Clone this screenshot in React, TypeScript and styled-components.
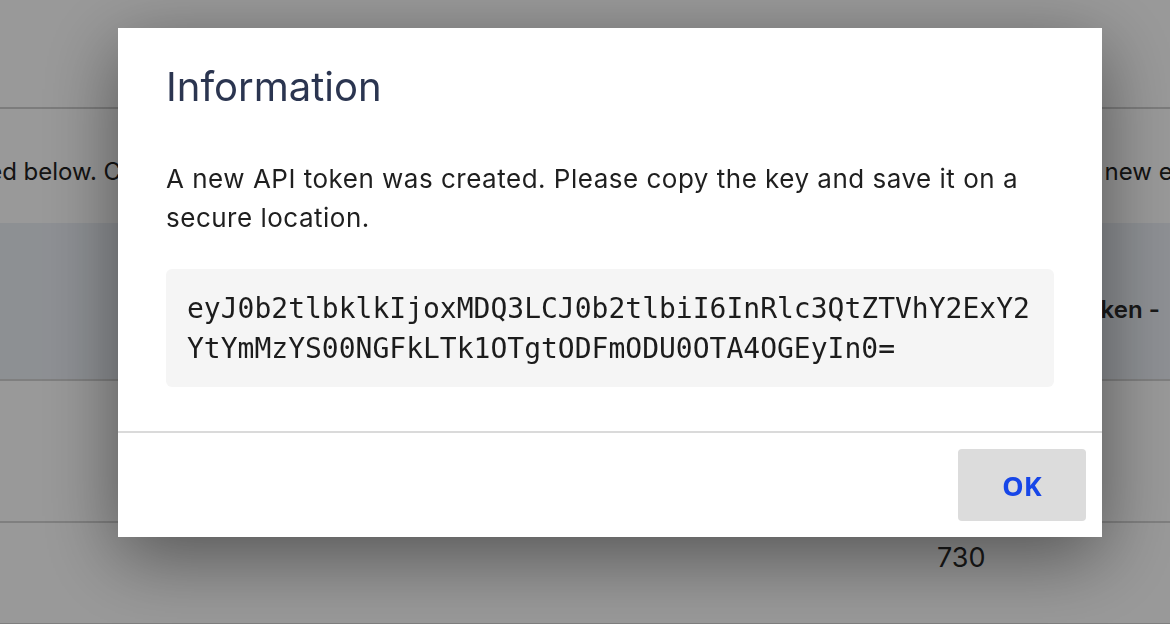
import React from "react";
import styled, { createGlobalStyle } from "styled-components";

const GlobalStyle = createGlobalStyle`
  html, body {
    margin: 0;
    padding: 0;
    background: #ffffff;
    font-family: Inter, "Noto Sans", sans-serif;
    overflow: hidden;
  }
`;

const Page = styled.div`
  width: 1170px;
  height: 624px;
  overflow: hidden;
  color: #2a2a2a;
`;

const TopBar = styled.div`
  height: 109px;
  border-bottom: 2px solid #cfcfcf;
  box-sizing: border-box;
`;

const Intro = styled.div`
  margin-top: 46px;
  display: flex;
  font-size: 24px;
  line-height: 34px;
  color: #222;
  white-space: nowrap;
`;

const Lead = styled.div`
  width: 323px;
  flex-shrink: 0;
  display: flex;
  justify-content: flex-end;
`;

const Tail = styled.span`
  margin-left: 723px;
  flex-shrink: 0;
`;

const Table = styled.div`
  margin-top: 34px;
  display: flex;
  flex-direction: column;
`;

const Row = styled.div<{ $head?: boolean; $height: number; $top: number }>`
  height: ${({ $height }) => $height}px;
  box-sizing: border-box;
  display: flex;
  align-items: flex-start;
  padding-top: ${({ $top }) => $top}px;
  background: ${({ $head }) => ($head ? "#ecf0f6" : "#ffffff")};
  border-bottom: 2px solid #d4d4d4;
  white-space: nowrap;
`;

const Cell = styled.span<{ $left: number; $head?: boolean }>`
  margin-left: ${({ $left }) => $left}px;
  font-size: ${({ $head }) => ($head ? 24 : 27)}px;
  line-height: 32px;
  font-weight: ${({ $head }) => ($head ? 600 : 400)};
  color: #2a2a2a;
`;

const Overlay = styled.div`
  position: fixed;
  inset: 0;
  background: rgba(0, 0, 0, 0.4);
  display: flex;
  align-items: flex-start;
  padding: 28px 0 0 118px;
`;

const Modal = styled.div`
  width: 984px;
  background: #ffffff;
  box-shadow: 0 20px 70px rgba(0, 0, 0, 0.45);
  display: flex;
  flex-direction: column;
`;

const Body = styled.div`
  padding: 36px 48px 44px;
`;

const Title = styled.h2`
  margin: 0;
  font-size: 40px;
  line-height: 46px;
  font-weight: 400;
  color: #2b3550;
`;

const Message = styled.p`
  margin: 49px 0 0;
  font-size: 26px;
  letter-spacing: 0.5px;
  line-height: 39px;
  color: #1f1f1f;
`;

const Code = styled.pre`
  margin: 32px 0 0;
  padding: 20px 20px 18px 21px;
  background: #f5f5f5;
  border-radius: 6px;
  font-family: "DejaVu Sans Mono", monospace;
  font-size: 28px;
  line-height: 40px;
  color: #1c1c1c;
  white-space: pre-wrap;
  word-break: break-all;
`;

const Footer = styled.div`
  border-top: 2px solid #dadada;
  padding: 16px;
  display: flex;
  justify-content: flex-end;
`;

const Button = styled.button`
  width: 128px;
  height: 72px;
  border: none;
  border-radius: 4px;
  background: #dcdcdc;
  color: #1746e8;
  font-family: "Noto Sans", Inter, sans-serif;
  font-weight: 700;
  font-size: 27px;
  cursor: pointer;
`;

const token =
  "eyJ0b2tlbklkIjoxMDQ3LCJ0b2tlbiI6InRlc3QtZTVhY2ExY2YtYmMzYS00NGFkLTk1OTgtODFmODU0OTA4OGEyIn0=";

export default function App() {
  return (
    <>
      <GlobalStyle />
      <Page>
        <TopBar />
        <Intro>
          <Lead>
            <span>The API tokens of this account are listed below. Create a new token</span>
          </Lead>
          <Tail>for a new environment.</Tail>
        </Intro>
        <Table>
          <Row $head $height={158} $top={71}>
            <Cell $head $left={1072}>
              Token -
            </Cell>
          </Row>
          <Row $height={142} $top={0} />
          <Row $height={102} $top={19}>
            <Cell $left={937}>730</Cell>
          </Row>
        </Table>
      </Page>
      <Overlay>
        <Modal>
          <Body>
            <Title>Information</Title>
            <Message>
              A new API token was created. Please copy the key and save it on a
              secure location.
            </Message>
            <Code>{token}</Code>
          </Body>
          <Footer>
            <Button>OK</Button>
          </Footer>
        </Modal>
      </Overlay>
    </>
  );
}
